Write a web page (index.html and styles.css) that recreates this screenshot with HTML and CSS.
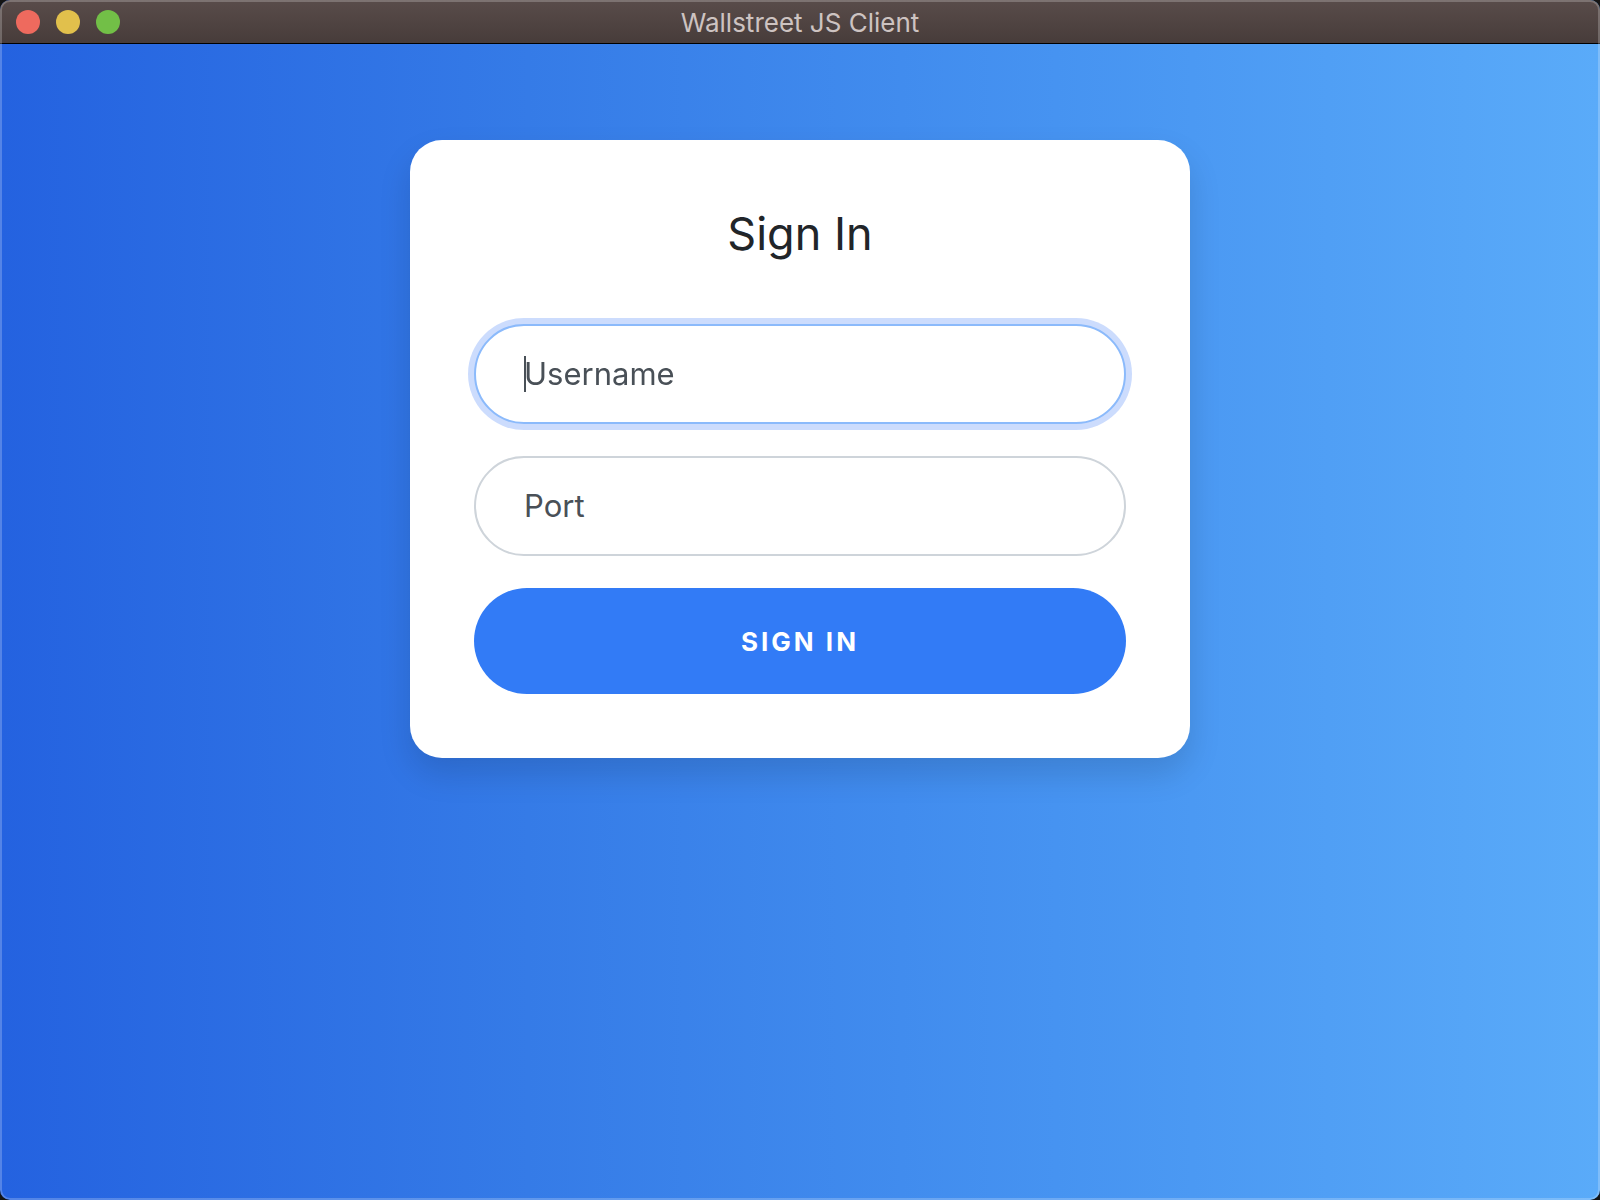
FILE: index.html
```html
<!DOCTYPE html>
<html lang="en">
<head>
  <meta charset="utf-8">
  <meta name="viewport" content="width=device-width, initial-scale=1">
  <title>Wallstreet JS Client</title>
  <link rel="stylesheet" href="styles.css">
</head>
<body>
  <div class="window">
    <header class="titlebar">
      <div class="window-controls">
        <button type="button" class="control control-close" aria-label="Close"></button>
        <button type="button" class="control control-minimize" aria-label="Minimize"></button>
        <button type="button" class="control control-zoom" aria-label="Zoom"></button>
      </div>
      <span class="window-title">Wallstreet JS Client</span>
    </header>
    <main class="content">
      <section class="card">
        <h1 class="card-title">Sign In</h1>
        <form class="signin-form">
          <div class="field">
            <input class="field-input" type="text" id="username" name="username" autocomplete="off" autofocus>
            <label class="field-label field-label-active" for="username">Username</label>
          </div>
          <div class="field">
            <input class="field-input" type="text" id="port" name="port" autocomplete="off">
            <label class="field-label" for="port">Port</label>
          </div>
          <button class="submit" type="submit">Sign in</button>
        </form>
      </section>
    </main>
  </div>
</body>
</html>
```
FILE: styles.css
```css
*,
*::before,
*::after {
  box-sizing: border-box;
}

body {
  margin: 0;
  background: #141414;
  font-family: Inter, "Liberation Sans", sans-serif;
  color: #212529;
}

.window {
  position: relative;
  display: flex;
  flex-direction: column;
  min-height: 100vh;
  border-radius: 10px;
  overflow: hidden;
  background: linear-gradient(to right, #2462e0, #357be7 33%, #4693f1 66%, #5aabf9);
}

/* Light rim that runs round the whole window */
.window::after {
  content: "";
  position: absolute;
  inset: 0;
  border-radius: 10px;
  box-shadow: inset 0 0 0 2px rgba(255, 255, 255, 0.22);
  pointer-events: none;
}

.titlebar {
  display: grid;
  grid-template-columns: 1fr auto 1fr;
  align-items: center;
  height: 44px;
  padding: 0 16px;
  background: linear-gradient(#594c4a, #473c3a);
  border-bottom: 1px solid #000;
}

.window-controls {
  display: flex;
  gap: 16px;
}

.control {
  width: 24px;
  height: 24px;
  padding: 0;
  border: 0;
  border-radius: 50%;
}

.control-close {
  background: #ee6a5e;
}

.control-minimize {
  background: #e1c04c;
}

.control-zoom {
  background: #72bf47;
}

.window-title {
  padding-top: 2px;
  font-size: 26px;
  line-height: 32px;
  color: #cdc3c1;
}

.content {
  flex: 1;
  padding: 96px 32px 64px;
}

.card {
  max-width: 780px;
  margin: 0 auto;
  padding: 64px;
  border-radius: 32px;
  background: #fff;
  box-shadow: 0 16px 32px rgba(0, 0, 0, 0.13);
}

.card-title {
  margin: 0 0 60px;
  font-size: 45px;
  font-weight: 400;
  line-height: 60px;
  text-align: center;
}

.signin-form {
  display: flex;
  flex-direction: column;
  gap: 32px;
}

.field {
  position: relative;
}

.field-input {
  display: block;
  width: 100%;
  height: 100px;
  padding: 0 48px;
  border: 2px solid #ced4da;
  border-radius: 50px;
  outline: 0;
  background: #fff;
  font: inherit;
  font-size: 31px;
  color: #495057;
}

.field-input:focus {
  border-color: #8bbafb;
  box-shadow: 0 0 0 6px #ccdcfd;
  caret-color: transparent;
}

.field-label {
  position: absolute;
  inset: 0;
  display: flex;
  align-items: center;
  padding: 0 50px;
  font-size: 31px;
  line-height: 36px;
  color: #495057;
  cursor: text;
}

/* Insertion point in front of the label of the active field */
.field-label-active::before {
  content: "";
  width: 2px;
  height: 36px;
  margin-right: -2px;
  background: #495057;
}

.submit {
  height: 106px;
  border: 0;
  border-radius: 53px;
  background: #327bf6;
  font: inherit;
  font-size: 26px;
  font-weight: 700;
  letter-spacing: 3px;
  text-transform: uppercase;
  color: #fff;
}
```
